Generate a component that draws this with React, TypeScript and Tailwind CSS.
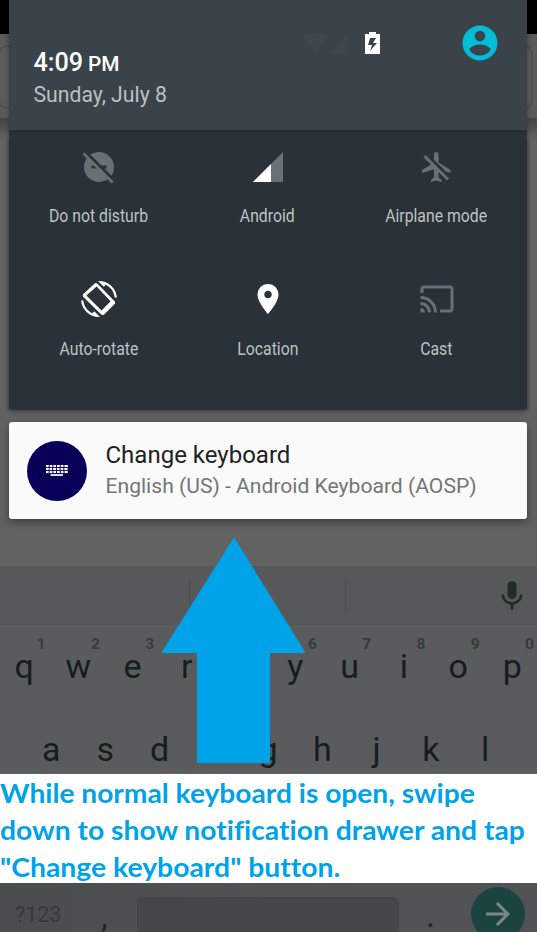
import React from "react";

type IconProps = { d: string; className?: string };

function Icon({ d, className = "" }: IconProps) {
  return (
    <svg viewBox="0 0 24 24" className={`block shrink-0 fill-current ${className}`}>
      <path d={d} />
    </svg>
  );
}

const paths = {
  account:
    "M12 2C6.48 2 2 6.48 2 12s4.48 10 10 10 10-4.48 10-10S17.52 2 12 2zm0 3c1.66 0 3 1.34 3 3s-1.34 3-3 3-3-1.34-3-3 1.34-3 3-3zm0 14.2c-2.5 0-4.71-1.28-6-3.22.03-1.99 4-3.08 6-3.08 1.99 0 5.97 1.09 6 3.08-1.29 1.94-3.5 3.22-6 3.22z",
  dnd: "M17 11v2h-1.46l4.81 4.81C21.39 16.15 22 14.15 22 12c0-5.52-4.48-10-10-10-2.15 0-4.15.61-5.81 1.65L13.54 11H17zM2.27 2.27L1 3.54l2.78 2.78C2.61 7.93 2 9.89 2 12c0 5.52 4.48 10 10 10 2.11 0 4.07-.61 5.68-1.78L20.46 23l1.27-1.27L11 11 2.27 2.27zM7 13v-2h1.46l2 2H7z",
  airplane:
    "M13 9V3.5c0-.83-.67-1.5-1.5-1.5S10 2.67 10 3.5v3.68l7.83 7.83L21 16v-2l-8-5zM3 5.27l4.99 4.99L2 14v2l8-2.5V19l-2 1.5V22l3.5-1 3.5 1v-1.5L13 19v-3.73L18.73 21 20 19.73 4.27 4 3 5.27z",
  location:
    "M12 2C8.13 2 5 5.13 5 9c0 5.25 7 13 7 13s7-7.75 7-13c0-3.87-3.13-7-7-7zm0 9.5c-1.38 0-2.5-1.12-2.5-2.5s1.12-2.5 2.5-2.5 2.5 1.12 2.5 2.5-1.12 2.5-2.5 2.5z",
  cast: "M21 3H3c-1.1 0-2 .9-2 2v3h2V5h18v14h-7v2h7c1.1 0 2-.9 2-2V5c0-1.1-.9-2-2-2zM1 18v3h3c0-1.66-1.34-3-3-3zm0-4v2c2.76 0 5 2.24 5 5h2c0-3.87-3.13-7-7-7zm0-4v2c4.97 0 9 4.03 9 9h2c0-6.08-4.93-11-11-11z",
  mic: "M12 14c1.66 0 2.99-1.34 2.99-3L15 5c0-1.66-1.34-3-3-3S9 3.34 9 5v6c0 1.66 1.34 3 3 3zm5.3-3c0 3-2.54 5.1-5.3 5.1S6.7 14 6.7 11H5c0 3.41 2.72 6.23 6 6.72V21h2v-3.28c3.28-.48 6-3.3 6-6.72h-1.7z",
  arrow: "M12 4l-1.41 1.41L16.17 11H4v2h12.17l-5.58 5.59L12 20l8-8z",
};

function RotateIcon() {
  return (
    <svg viewBox="0 0 24 24" className="block size-9 shrink-0 fill-white">
      <path d="M16.48 2.52c3.27 1.55 5.61 4.72 5.97 8.48h1.5C23.44 4.84 18.29 0 12 0l-.66.03 3.81 3.81 1.33-1.32zM7.52 21.48C4.25 19.94 1.91 16.76 1.55 13H.05C.56 19.16 5.71 24 12 24l.66-.03-3.81-3.81-1.33 1.32z" />
      <path
        fillRule="evenodd"
        d="M11 1.75c-.6-.6-1.54-.6-2.12 0L1.6 8.6c-.6.6-.6 1.4 0 2L13.5 22.3c.6.5 1.3.5 1.9 0l7-6.9c.5-.6.5-1.3 0-1.9L11 1.75zM3.6 9.7L10.4 3.6l9.3 9.9-6 6.2L3.6 9.7z"
      />
    </svg>
  );
}

function SignalIcon() {
  return (
    <svg viewBox="0 0 24 24" className="block size-9 shrink-0">
      <path d="M22 2L2 22h20z" fill="#6b7173" />
      <path d="M14 10L2 22h12z" fill="#fff" />
    </svg>
  );
}

function StatusIcons() {
  return (
    <svg viewBox="0 0 80 24" className="ml-auto mt-[31px] h-6 w-20 shrink-0">
      <path d="M0 5Q14-2 27 5L14 22z" fill="#3f474d" />
      <path d="M46 5V23H28z" fill="#3f474d" />
      <path
        fillRule="evenodd"
        d="M67 1h7v2h4v20H63V3h4zM68 7l-2 7h4l-2 6 7-8h-4l3-5z"
        fill="#fff"
      />
    </svg>
  );
}

function KeyboardGlyph() {
  const rows = [0, 1, 2].map((r) => (
    <g key={r}>
      {[0, 1, 2, 3, 4, 5].map((c) => (
        <rect key={c} x={c * 3.7 + (c > 0 && r === 1 ? -0.2 : 0)} y={r * 3} width={c === 5 ? 3.3 : 2.7} height="2.1" />
      ))}
    </g>
  ));
  return (
    <svg viewBox="0 0 22 12" className="h-3 w-[22px] fill-white">
      {rows}
      <rect x="4.6" y="9.2" width="12.4" height="1.7" />
    </svg>
  );
}

function Tile({ label, icon }: { label: string; icon: React.ReactNode }) {
  return (
    <div className="flex w-[169px] flex-col items-center">
      {icon}
      <span className="mt-[19.5px] scale-x-[.877] whitespace-nowrap text-[18px] leading-6 text-[#bec2c3]">{label}</span>
    </div>
  );
}

function Edge({ side }: { side: "left" | "right" }) {
  const left = side === "left";
  return (
    <div className={`flex h-[410px] shrink-0 flex-col overflow-hidden ${left ? "w-[9px]" : "w-[10px]"}`}>
      <div className="h-[34px] bg-black" />
      <div className="h-[85px] border-b border-[#484848] bg-[#5a5a5a] pt-[11px]">
        <div
          className={`h-[64px] w-10 rounded-[9px] border-2 border-[#4e4e4e] bg-[#5c5c5c] ${left ? "-ml-0.5" : "-ml-[34px]"}`}
        />
      </div>
      <div className="h-5 bg-linear-to-b from-[#454545] to-[#626262]" />
      <div className={`flex-1 ${left ? "bg-linear-to-r" : "bg-linear-to-l"} from-[#636363] from-60% to-[#555]`} />
    </div>
  );
}

function Drawer() {
  return (
    <section className="relative z-10 flex h-[410px] w-[518px] flex-col overflow-hidden rounded-b-[3px] bg-[#283238] shadow-[0_2px_5px_rgba(0,0,0,.35)]">
      <header className="flex h-[130px] shrink-0 bg-[#3b434a]">
        <div className="ml-[24.5px] mt-[47px] w-[180px]">
          <div className="flex h-[32px] items-baseline gap-[5px] whitespace-nowrap font-medium text-white">
            <span className="text-[25.2px] leading-[32px]">4:09</span>
            <span className="text-[20.8px] leading-[32px]">PM</span>
          </div>
          <div className="whitespace-nowrap text-[21.2px] leading-[32px] text-[#bdc0c2]">Sunday, July 8</div>
        </div>
        <StatusIcons />
        <Icon d={paths.account} className="ml-[77px] mr-[26px] mt-[22px] size-[42px] text-[#00bcd7]" />
      </header>
      <div className="h-[3px] shrink-0 bg-linear-to-b from-[#202a30] to-[#283238]" />
      <div className="-ml-px grid grid-cols-[169px_169px_169px] justify-center gap-y-[53px] pt-[15.5px]">
        <Tile label="Do not disturb" icon={<Icon d={paths.dnd} className="size-9 text-[#697073]" />} />
        <Tile label="Android" icon={<SignalIcon />} />
        <Tile label="Airplane mode" icon={<Icon d={paths.airplane} className="size-9 text-[#697073]" />} />
        <Tile label="Auto-rotate" icon={<RotateIcon />} />
        <Tile label="Location" icon={<Icon d={paths.location} className="size-9 text-white" />} />
        <Tile label="Cast" icon={<Icon d={paths.cast} className="size-9 text-[#697073]" />} />
      </div>
    </section>
  );
}

function Notification() {
  return (
    <section className="ml-[9px] mt-3 flex h-[97px] w-[518px] shrink-0 items-center rounded-[3px] bg-[#fafafa] shadow-[0_3px_8px_rgba(0,0,0,.4)]">
      <div className="ml-[18px] flex size-[60px] shrink-0 items-center justify-center rounded-full bg-[#080058]">
        <KeyboardGlyph />
      </div>
      <div className="ml-[18.5px] whitespace-nowrap pb-[2px]">
        <div className="text-[24px] leading-[32px] text-[#212121]">Change keyboard</div>
        <div className="text-[21.1px] leading-[29px] text-[#757575]">English (US) - Android Keyboard (AOSP)</div>
      </div>
    </section>
  );
}

function Keyboard() {
  return (
    <section className="mt-[47px] flex h-[207px] shrink-0 flex-col overflow-hidden bg-[#5a5b5d] text-[#151d21]">
      <div className="flex h-[61px] shrink-0 items-center border-b border-[#626365] bg-[#575859]">
        <div className="ml-[189px] h-9 w-px bg-[#4e4f50]" />
        <div className="ml-[155px] h-9 w-px bg-[#4e4f50]" />
        <Icon d={paths.mic} className="ml-[147.5px] size-9 text-[#212a2c]" />
      </div>
      <div className="-ml-[3px] flex h-[82px] w-[543px] shrink-0 pt-[7px]">
        {"qwertyuiop".split("").map((letter, i) => (
          <div key={letter} className="flex w-[54.25px] shrink-0 flex-col items-center">
            <span className="ml-[34px] text-[15.5px] font-bold leading-[20px] text-[#343b3e]">{(i + 1) % 10}</span>
            <span className="-mt-[3px] text-[34px] leading-[30px]">{letter}</span>
          </div>
        ))}
      </div>
      <div className="ml-[24px] flex h-[64px] w-[489px] shrink-0">
        {"asdfghjkl".split("").map((letter) => (
          <span key={letter} className="w-[54.25px] shrink-0 pt-[24px] text-center text-[34px] leading-[32px]">
            {letter}
          </span>
        ))}
      </div>
    </section>
  );
}

function Caption() {
  return (
    <section className="mt-px h-[109px] shrink-0 bg-white pt-px font-['Lato',sans-serif] text-[26px] font-bold leading-[37px] text-[#00a2e8] [font-variant-ligatures:none]">
      <div className="w-max origin-left scale-x-[1.083] whitespace-nowrap">While normal keyboard is open, swipe</div>
      <div className="w-max origin-left scale-x-[1.087] whitespace-nowrap">down to show notification drawer and tap</div>
      <div className="w-max origin-left scale-x-[1.09] whitespace-nowrap">"Change keyboard" button.</div>
    </section>
  );
}

function BottomRow() {
  return (
    <section className="flex h-[49px] shrink-0 overflow-hidden bg-linear-to-r from-[#4a4d4d] via-[#515253] to-[#505253] text-[#202729]">
      <span className="ml-[15px] w-[86px] pt-[17px] text-[21.5px] leading-[30px] text-[#34393d]">?123</span>
      <span className="w-[36px] pt-[18px] text-[34px] leading-[30px]">,</span>
      <div className="mt-[14px] h-12 w-[262px] shrink-0 rounded-md bg-[#454648]" />
      <span className="w-[72px] pl-[27px] pt-[17px] text-[34px] leading-[30px]">.</span>
      <div className="mt-[4px] flex size-[54px] shrink-0 items-center justify-center rounded-full bg-[#1b443f]">
        <Icon d={paths.arrow} className="size-9 text-[#7b8785]" />
      </div>
    </section>
  );
}

export default function App() {
  return (
    <main className="relative flex h-[932px] w-[537px] flex-col overflow-hidden bg-[#626262] font-['Roboto',sans-serif]">
      <div className="flex h-[410px] shrink-0">
        <Edge side="left" />
        <Drawer />
        <Edge side="right" />
      </div>
      <Notification />
      <Keyboard />
      <Caption />
      <BottomRow />
      <svg viewBox="0 0 145 227" className="absolute left-[161px] top-[537px] h-[227px] w-[145px]">
        <path
          d="M73 2L143 115H108V225H37V115H2z"
          fill="#00a2e8"
          stroke="#00a2e8"
          strokeWidth="2"
          strokeLinejoin="round"
        />
      </svg>
    </main>
  );
}
